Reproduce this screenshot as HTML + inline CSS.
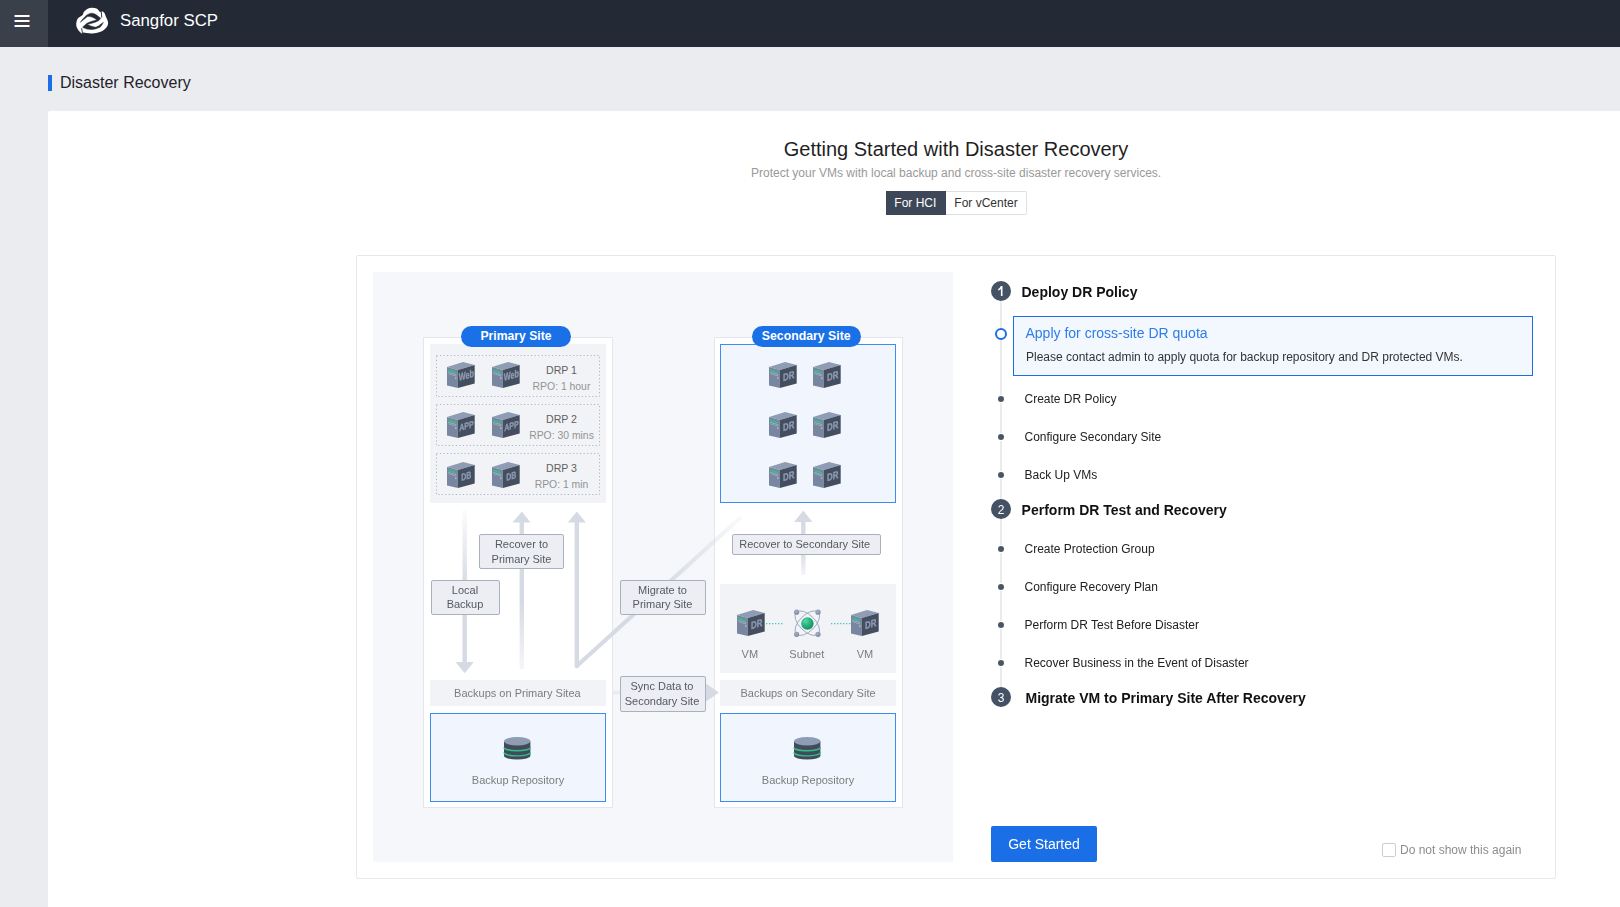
<!DOCTYPE html>
<html><head><meta charset="utf-8"><title>Disaster Recovery</title>
<style>
html,body{margin:0;padding:0;}
body{width:1620px;height:907px;overflow:hidden;position:relative;background:#ebecf0;font-family:"Liberation Sans",sans-serif;}
.t{position:absolute;white-space:nowrap;}
.r{position:absolute;box-sizing:border-box;}
svg{position:absolute;overflow:visible;}
</style></head><body>

<div class="r" style="left:0px;top:0px;width:1620px;height:47px;background:#232a35;"></div>
<div class="r" style="left:0px;top:0px;width:48px;height:47px;background:#3a4049;"></div>
<div class="r" style="left:14px;top:15px;width:16px;height:2px;background:#fff;"></div>
<div class="r" style="left:14px;top:15px;width:1px;height:2px;background:#5a6cff;opacity:0.8;"></div>
<div class="r" style="left:29px;top:15px;width:1px;height:2px;background:#ff5a5a;opacity:0.8;"></div>
<div class="r" style="left:14px;top:20px;width:16px;height:2px;background:#fff;"></div>
<div class="r" style="left:14px;top:20px;width:1px;height:2px;background:#5a6cff;opacity:0.8;"></div>
<div class="r" style="left:29px;top:20px;width:1px;height:2px;background:#ff5a5a;opacity:0.8;"></div>
<div class="r" style="left:14px;top:25px;width:16px;height:2px;background:#fff;"></div>
<div class="r" style="left:14px;top:25px;width:1px;height:2px;background:#5a6cff;opacity:0.8;"></div>
<div class="r" style="left:29px;top:25px;width:1px;height:2px;background:#ff5a5a;opacity:0.8;"></div>
<svg style="left:74px;top:6px" width="36" height="30" viewBox="0 0 36 30">
<path fill="#fff" d="M7.70,27.60 C7.70,27.60 5.48,25.77 4.60,24.50 C3.72,23.23 2.73,21.48 2.40,20.00 C2.07,18.52 2.28,16.95 2.60,15.60 C2.92,14.25 3.30,13.02 4.30,11.90 C5.30,10.78 7.68,9.88 8.60,8.90 C9.52,7.92 9.03,6.98 9.80,6.00 C10.57,5.02 11.85,3.70 13.20,3.00 C14.55,2.30 16.35,1.87 17.90,1.80 C19.45,1.73 21.27,2.02 22.50,2.60 C23.73,3.18 24.65,4.67 25.30,5.30 C25.95,5.93 26.40,6.40 26.40,6.40 C26.40,6.40 27.30,4.90 27.30,4.90 C27.30,4.90 28.25,5.22 28.80,5.60 C29.35,5.98 30.13,6.47 30.60,7.20 C31.07,7.93 31.13,8.88 31.60,10.00 C32.07,11.12 32.98,12.70 33.40,13.90 C33.82,15.10 34.15,16.10 34.10,17.20 C34.05,18.30 33.72,19.45 33.10,20.50 C32.48,21.55 31.62,22.57 30.40,23.50 C29.18,24.43 27.78,25.43 25.80,26.10 C23.82,26.77 20.70,27.33 18.50,27.50 C16.30,27.67 14.13,27.25 12.60,27.10 C11.07,26.95 9.97,26.50 9.30,26.60 C8.63,26.70 8.60,27.70 8.60,27.70 C8.60,27.70 7.70,27.60 7.70,27.60 Z"/>
<path fill="#232a35" stroke="#232a35" stroke-width="0.45" stroke-linejoin="round" d="M6.40,16.30 C6.40,16.30 8.12,13.82 9.20,12.60 C10.28,11.38 11.62,9.90 12.90,9.00 C14.18,8.10 15.63,7.40 16.90,7.20 C18.17,7.00 19.33,7.33 20.50,7.80 C21.67,8.27 22.85,9.25 23.90,10.00 C24.95,10.75 26.80,12.30 26.80,12.30 C26.80,12.30 25.62,13.90 24.80,14.50 C23.98,15.10 23.22,15.40 21.90,15.90 C20.58,16.40 18.30,17.08 16.90,17.50 C15.50,17.92 13.50,18.40 13.50,18.40 C13.50,18.40 16.50,19.85 17.90,20.30 C19.30,20.75 20.58,21.33 21.90,21.10 C23.22,20.87 24.55,19.70 25.80,18.90 C27.05,18.10 29.40,16.30 29.40,16.30 C29.40,16.30 27.88,19.47 26.80,20.50 C25.72,21.53 24.38,22.00 22.90,22.50 C21.42,23.00 19.57,23.40 17.90,23.50 C16.23,23.60 14.45,23.47 12.90,23.10 C11.35,22.73 8.60,21.30 8.60,21.30 C8.60,21.30 10.78,18.80 12.00,17.90 C13.22,17.00 14.58,16.43 15.90,15.90 C17.22,15.37 18.75,15.07 19.90,14.70 C21.05,14.33 22.80,13.70 22.80,13.70 C22.80,13.70 20.88,12.48 19.90,12.00 C18.92,11.52 17.97,11.03 16.90,10.80 C15.83,10.57 13.50,10.60 13.50,10.60 C13.50,10.60 12.18,11.55 11.00,12.50 C9.82,13.45 6.40,16.30 6.40,16.30 Z"/>
<path fill="none" stroke="#232a35" stroke-width="0.9" stroke-linecap="round" d="M27.3,5.2 L27.7,11.2 M7.7,22.6 L8.5,27.5"/>
</svg>
<div class="t" style="left:120px;top:12px;font-size:17px;line-height:17px;color:#fff;font-size:16.8px;">Sangfor SCP</div>
<div class="r" style="left:48px;top:75px;width:4px;height:16px;background:#1b6ee8;"></div>
<div class="t" style="left:60px;top:75px;font-size:16px;line-height:16px;color:#1f2329;">Disaster Recovery</div>
<div class="r" style="left:48px;top:111px;width:1572px;height:796px;background:#fff;border-top-left-radius:2px;"></div>
<div class="t" style="left:756.0px;width:400px;text-align:center;top:139px;font-size:20px;line-height:20px;color:#1f1f1f;">Getting Started with Disaster Recovery</div>
<div class="t" style="left:751.0px;width:400px;text-align:center;top:167px;font-size:12px;line-height:12px;color:#999;">Protect your VMs with local backup and cross-site disaster recovery services.</div>
<div class="r" style="left:886px;top:191px;width:60px;height:24px;background:#3d4757;"></div>
<div class="t" style="left:885.3px;width:60px;text-align:center;top:197px;font-size:12px;line-height:12px;color:#fff;">For HCI</div>
<div class="r" style="left:946px;top:191px;width:81px;height:24px;border:1px solid #dcdfe6;border-left:none;border-radius:0 2px 2px 0;"></div>
<div class="t" style="left:946.0px;width:80px;text-align:center;top:197px;font-size:12px;line-height:12px;color:#333;">For vCenter</div>
<div class="r" style="left:356px;top:255px;width:1200px;height:624px;border:1px solid #e6e8ec;border-radius:2px;"></div>
<div class="r" style="left:373px;top:272px;width:580px;height:590px;background:#f5f7fa;"></div>
<div class="r" style="left:423px;top:337px;width:190px;height:471px;background:#fff;border:1px solid #e3e6ed;"></div>
<div class="r" style="left:430px;top:344px;width:176px;height:159px;background:#f1f3f7;"></div>
<svg style="left:436px;top:355px" width="164" height="42"><rect x="0.5" y="0.5" width="163" height="41" fill="none" stroke="#aeb5c0" stroke-width="1" stroke-dasharray="1.2 2.3"/></svg>
<div class="t" style="left:521.5px;width:80px;text-align:center;top:365px;font-size:11px;line-height:11px;color:#606060;font-size:10.6px;">DRP 1</div>
<div class="t" style="left:521.5px;width:80px;text-align:center;top:381px;font-size:11px;line-height:11px;color:#939393;font-size:10.4px;">RPO: 1 hour</div>
<svg style="left:436px;top:404px" width="164" height="42"><rect x="0.5" y="0.5" width="163" height="41" fill="none" stroke="#aeb5c0" stroke-width="1" stroke-dasharray="1.2 2.3"/></svg>
<div class="t" style="left:521.5px;width:80px;text-align:center;top:414px;font-size:11px;line-height:11px;color:#606060;font-size:10.6px;">DRP 2</div>
<div class="t" style="left:521.5px;width:80px;text-align:center;top:430px;font-size:11px;line-height:11px;color:#939393;font-size:10.4px;">RPO: 30 mins</div>
<svg style="left:436px;top:453px" width="164" height="42"><rect x="0.5" y="0.5" width="163" height="41" fill="none" stroke="#aeb5c0" stroke-width="1" stroke-dasharray="1.2 2.3"/></svg>
<div class="t" style="left:521.5px;width:80px;text-align:center;top:463px;font-size:11px;line-height:11px;color:#606060;font-size:10.6px;">DRP 3</div>
<div class="t" style="left:521.5px;width:80px;text-align:center;top:479px;font-size:11px;line-height:11px;color:#939393;font-size:10.4px;">RPO: 1 min</div>
<svg style="left:447px;top:362px;will-change:transform" width="28" height="26" viewBox="0 0 28 26">
<path fill="#8e9cb4" d="M0,4.9 L16.1,0 L27.7,3 L10.9,7.9 Z"/>
<path fill="#7886a0" d="M0,4.9 L10.9,7.9 L10.9,25.9 L0,23.4 Z"/>
<path fill="#454e5f" d="M10.9,7.9 L27.7,3 L27.7,21.4 L10.9,25.9 Z"/>
<path fill="#2fc38c" d="M1.2,7.6 L9.3,9.9 L9.3,11.5 L1.2,9.2 Z"/>
<path fill="#a9b4c6" d="M1.2,10 L9.3,12.3 L9.3,13 L1.2,10.7 Z M1.2,11.5 L9.3,13.8 L9.3,14.4 L1.2,12.1 Z"/>
<rect x="8.2" y="15.6" width="1.2" height="1.1" fill="#dfe5ee"/>
<text x="11.7" y="22.5" transform="matrix(1,-0.29,0,1,0,0)" font-family="Liberation Sans" font-weight="bold" font-size="10.5" fill="#8d9bb4" stroke="#8d9bb4" stroke-width="0.35" textLength="15.3" lengthAdjust="spacingAndGlyphs">Web</text>
</svg>
<svg style="left:492px;top:362px;will-change:transform" width="28" height="26" viewBox="0 0 28 26">
<path fill="#8e9cb4" d="M0,4.9 L16.1,0 L27.7,3 L10.9,7.9 Z"/>
<path fill="#7886a0" d="M0,4.9 L10.9,7.9 L10.9,25.9 L0,23.4 Z"/>
<path fill="#454e5f" d="M10.9,7.9 L27.7,3 L27.7,21.4 L10.9,25.9 Z"/>
<path fill="#2fc38c" d="M1.2,7.6 L9.3,9.9 L9.3,11.5 L1.2,9.2 Z"/>
<path fill="#a9b4c6" d="M1.2,10 L9.3,12.3 L9.3,13 L1.2,10.7 Z M1.2,11.5 L9.3,13.8 L9.3,14.4 L1.2,12.1 Z"/>
<rect x="8.2" y="15.6" width="1.2" height="1.1" fill="#dfe5ee"/>
<text x="11.7" y="22.5" transform="matrix(1,-0.29,0,1,0,0)" font-family="Liberation Sans" font-weight="bold" font-size="10.5" fill="#8d9bb4" stroke="#8d9bb4" stroke-width="0.35" textLength="15.3" lengthAdjust="spacingAndGlyphs">Web</text>
</svg>
<svg style="left:447px;top:412px;will-change:transform" width="28" height="26" viewBox="0 0 28 26">
<path fill="#8e9cb4" d="M0,4.9 L16.1,0 L27.7,3 L10.9,7.9 Z"/>
<path fill="#7886a0" d="M0,4.9 L10.9,7.9 L10.9,25.9 L0,23.4 Z"/>
<path fill="#454e5f" d="M10.9,7.9 L27.7,3 L27.7,21.4 L10.9,25.9 Z"/>
<path fill="#2fc38c" d="M1.2,7.6 L9.3,9.9 L9.3,11.5 L1.2,9.2 Z"/>
<path fill="#a9b4c6" d="M1.2,10 L9.3,12.3 L9.3,13 L1.2,10.7 Z M1.2,11.5 L9.3,13.8 L9.3,14.4 L1.2,12.1 Z"/>
<rect x="8.2" y="15.6" width="1.2" height="1.1" fill="#dfe5ee"/>
<text x="12.2" y="22.8" transform="matrix(1,-0.29,0,1,0,0)" font-family="Liberation Sans" font-weight="bold" font-size="9.5" fill="#8d9bb4" stroke="#8d9bb4" stroke-width="0.35" textLength="14.5" lengthAdjust="spacingAndGlyphs">APP</text>
</svg>
<svg style="left:492px;top:412px;will-change:transform" width="28" height="26" viewBox="0 0 28 26">
<path fill="#8e9cb4" d="M0,4.9 L16.1,0 L27.7,3 L10.9,7.9 Z"/>
<path fill="#7886a0" d="M0,4.9 L10.9,7.9 L10.9,25.9 L0,23.4 Z"/>
<path fill="#454e5f" d="M10.9,7.9 L27.7,3 L27.7,21.4 L10.9,25.9 Z"/>
<path fill="#2fc38c" d="M1.2,7.6 L9.3,9.9 L9.3,11.5 L1.2,9.2 Z"/>
<path fill="#a9b4c6" d="M1.2,10 L9.3,12.3 L9.3,13 L1.2,10.7 Z M1.2,11.5 L9.3,13.8 L9.3,14.4 L1.2,12.1 Z"/>
<rect x="8.2" y="15.6" width="1.2" height="1.1" fill="#dfe5ee"/>
<text x="12.2" y="22.8" transform="matrix(1,-0.29,0,1,0,0)" font-family="Liberation Sans" font-weight="bold" font-size="9.5" fill="#8d9bb4" stroke="#8d9bb4" stroke-width="0.35" textLength="14.5" lengthAdjust="spacingAndGlyphs">APP</text>
</svg>
<svg style="left:447px;top:462px;will-change:transform" width="28" height="26" viewBox="0 0 28 26">
<path fill="#8e9cb4" d="M0,4.9 L16.1,0 L27.7,3 L10.9,7.9 Z"/>
<path fill="#7886a0" d="M0,4.9 L10.9,7.9 L10.9,25.9 L0,23.4 Z"/>
<path fill="#454e5f" d="M10.9,7.9 L27.7,3 L27.7,21.4 L10.9,25.9 Z"/>
<path fill="#2fc38c" d="M1.2,7.6 L9.3,9.9 L9.3,11.5 L1.2,9.2 Z"/>
<path fill="#a9b4c6" d="M1.2,10 L9.3,12.3 L9.3,13 L1.2,10.7 Z M1.2,11.5 L9.3,13.8 L9.3,14.4 L1.2,12.1 Z"/>
<rect x="8.2" y="15.6" width="1.2" height="1.1" fill="#dfe5ee"/>
<text x="14.2" y="23.2" transform="matrix(1,-0.29,0,1,0,0)" font-family="Liberation Sans" font-weight="bold" font-size="10" fill="#8d9bb4" stroke="#8d9bb4" stroke-width="0.35" textLength="10" lengthAdjust="spacingAndGlyphs">DB</text>
</svg>
<svg style="left:492px;top:462px;will-change:transform" width="28" height="26" viewBox="0 0 28 26">
<path fill="#8e9cb4" d="M0,4.9 L16.1,0 L27.7,3 L10.9,7.9 Z"/>
<path fill="#7886a0" d="M0,4.9 L10.9,7.9 L10.9,25.9 L0,23.4 Z"/>
<path fill="#454e5f" d="M10.9,7.9 L27.7,3 L27.7,21.4 L10.9,25.9 Z"/>
<path fill="#2fc38c" d="M1.2,7.6 L9.3,9.9 L9.3,11.5 L1.2,9.2 Z"/>
<path fill="#a9b4c6" d="M1.2,10 L9.3,12.3 L9.3,13 L1.2,10.7 Z M1.2,11.5 L9.3,13.8 L9.3,14.4 L1.2,12.1 Z"/>
<rect x="8.2" y="15.6" width="1.2" height="1.1" fill="#dfe5ee"/>
<text x="14.2" y="23.2" transform="matrix(1,-0.29,0,1,0,0)" font-family="Liberation Sans" font-weight="bold" font-size="10" fill="#8d9bb4" stroke="#8d9bb4" stroke-width="0.35" textLength="10" lengthAdjust="spacingAndGlyphs">DB</text>
</svg>
<div class="r" style="left:461px;top:326px;width:110px;height:21px;background:#1a70e6;border-radius:11px;"></div>
<div class="t" style="left:461.0px;width:110px;text-align:center;top:330px;font-size:12px;line-height:12px;color:#fff;font-weight:bold;font-size:12.2px;">Primary Site</div>
<div class="r" style="left:714px;top:337px;width:189px;height:471px;background:#fff;border:1px solid #e3e6ed;"></div>
<div class="r" style="left:720px;top:344px;width:176px;height:159px;background:#f1f6fe;border:1px solid #3f8cf0;"></div>
<svg style="left:769px;top:362px;will-change:transform" width="28" height="26" viewBox="0 0 28 26">
<path fill="#8e9cb4" d="M0,4.9 L16.1,0 L27.7,3 L10.9,7.9 Z"/>
<path fill="#7886a0" d="M0,4.9 L10.9,7.9 L10.9,25.9 L0,23.4 Z"/>
<path fill="#454e5f" d="M10.9,7.9 L27.7,3 L27.7,21.4 L10.9,25.9 Z"/>
<path fill="#2fc38c" d="M1.2,7.6 L9.3,9.9 L9.3,11.5 L1.2,9.2 Z"/>
<path fill="#a9b4c6" d="M1.2,10 L9.3,12.3 L9.3,13 L1.2,10.7 Z M1.2,11.5 L9.3,13.8 L9.3,14.4 L1.2,12.1 Z"/>
<rect x="8.2" y="15.6" width="1.2" height="1.1" fill="#dfe5ee"/>
<text x="14.1" y="23.3" transform="matrix(1,-0.29,0,1,0,0)" font-family="Liberation Sans" font-weight="bold" font-size="10.4" fill="#8d9bb4" stroke="#8d9bb4" stroke-width="0.35" textLength="11.4" lengthAdjust="spacingAndGlyphs">DR</text>
</svg>
<svg style="left:813px;top:362px;will-change:transform" width="28" height="26" viewBox="0 0 28 26">
<path fill="#8e9cb4" d="M0,4.9 L16.1,0 L27.7,3 L10.9,7.9 Z"/>
<path fill="#7886a0" d="M0,4.9 L10.9,7.9 L10.9,25.9 L0,23.4 Z"/>
<path fill="#454e5f" d="M10.9,7.9 L27.7,3 L27.7,21.4 L10.9,25.9 Z"/>
<path fill="#2fc38c" d="M1.2,7.6 L9.3,9.9 L9.3,11.5 L1.2,9.2 Z"/>
<path fill="#a9b4c6" d="M1.2,10 L9.3,12.3 L9.3,13 L1.2,10.7 Z M1.2,11.5 L9.3,13.8 L9.3,14.4 L1.2,12.1 Z"/>
<rect x="8.2" y="15.6" width="1.2" height="1.1" fill="#dfe5ee"/>
<text x="14.1" y="23.3" transform="matrix(1,-0.29,0,1,0,0)" font-family="Liberation Sans" font-weight="bold" font-size="10.4" fill="#8d9bb4" stroke="#8d9bb4" stroke-width="0.35" textLength="11.4" lengthAdjust="spacingAndGlyphs">DR</text>
</svg>
<svg style="left:769px;top:412px;will-change:transform" width="28" height="26" viewBox="0 0 28 26">
<path fill="#8e9cb4" d="M0,4.9 L16.1,0 L27.7,3 L10.9,7.9 Z"/>
<path fill="#7886a0" d="M0,4.9 L10.9,7.9 L10.9,25.9 L0,23.4 Z"/>
<path fill="#454e5f" d="M10.9,7.9 L27.7,3 L27.7,21.4 L10.9,25.9 Z"/>
<path fill="#2fc38c" d="M1.2,7.6 L9.3,9.9 L9.3,11.5 L1.2,9.2 Z"/>
<path fill="#a9b4c6" d="M1.2,10 L9.3,12.3 L9.3,13 L1.2,10.7 Z M1.2,11.5 L9.3,13.8 L9.3,14.4 L1.2,12.1 Z"/>
<rect x="8.2" y="15.6" width="1.2" height="1.1" fill="#dfe5ee"/>
<text x="14.1" y="23.3" transform="matrix(1,-0.29,0,1,0,0)" font-family="Liberation Sans" font-weight="bold" font-size="10.4" fill="#8d9bb4" stroke="#8d9bb4" stroke-width="0.35" textLength="11.4" lengthAdjust="spacingAndGlyphs">DR</text>
</svg>
<svg style="left:813px;top:412px;will-change:transform" width="28" height="26" viewBox="0 0 28 26">
<path fill="#8e9cb4" d="M0,4.9 L16.1,0 L27.7,3 L10.9,7.9 Z"/>
<path fill="#7886a0" d="M0,4.9 L10.9,7.9 L10.9,25.9 L0,23.4 Z"/>
<path fill="#454e5f" d="M10.9,7.9 L27.7,3 L27.7,21.4 L10.9,25.9 Z"/>
<path fill="#2fc38c" d="M1.2,7.6 L9.3,9.9 L9.3,11.5 L1.2,9.2 Z"/>
<path fill="#a9b4c6" d="M1.2,10 L9.3,12.3 L9.3,13 L1.2,10.7 Z M1.2,11.5 L9.3,13.8 L9.3,14.4 L1.2,12.1 Z"/>
<rect x="8.2" y="15.6" width="1.2" height="1.1" fill="#dfe5ee"/>
<text x="14.1" y="23.3" transform="matrix(1,-0.29,0,1,0,0)" font-family="Liberation Sans" font-weight="bold" font-size="10.4" fill="#8d9bb4" stroke="#8d9bb4" stroke-width="0.35" textLength="11.4" lengthAdjust="spacingAndGlyphs">DR</text>
</svg>
<svg style="left:769px;top:462px;will-change:transform" width="28" height="26" viewBox="0 0 28 26">
<path fill="#8e9cb4" d="M0,4.9 L16.1,0 L27.7,3 L10.9,7.9 Z"/>
<path fill="#7886a0" d="M0,4.9 L10.9,7.9 L10.9,25.9 L0,23.4 Z"/>
<path fill="#454e5f" d="M10.9,7.9 L27.7,3 L27.7,21.4 L10.9,25.9 Z"/>
<path fill="#2fc38c" d="M1.2,7.6 L9.3,9.9 L9.3,11.5 L1.2,9.2 Z"/>
<path fill="#a9b4c6" d="M1.2,10 L9.3,12.3 L9.3,13 L1.2,10.7 Z M1.2,11.5 L9.3,13.8 L9.3,14.4 L1.2,12.1 Z"/>
<rect x="8.2" y="15.6" width="1.2" height="1.1" fill="#dfe5ee"/>
<text x="14.1" y="23.3" transform="matrix(1,-0.29,0,1,0,0)" font-family="Liberation Sans" font-weight="bold" font-size="10.4" fill="#8d9bb4" stroke="#8d9bb4" stroke-width="0.35" textLength="11.4" lengthAdjust="spacingAndGlyphs">DR</text>
</svg>
<svg style="left:813px;top:462px;will-change:transform" width="28" height="26" viewBox="0 0 28 26">
<path fill="#8e9cb4" d="M0,4.9 L16.1,0 L27.7,3 L10.9,7.9 Z"/>
<path fill="#7886a0" d="M0,4.9 L10.9,7.9 L10.9,25.9 L0,23.4 Z"/>
<path fill="#454e5f" d="M10.9,7.9 L27.7,3 L27.7,21.4 L10.9,25.9 Z"/>
<path fill="#2fc38c" d="M1.2,7.6 L9.3,9.9 L9.3,11.5 L1.2,9.2 Z"/>
<path fill="#a9b4c6" d="M1.2,10 L9.3,12.3 L9.3,13 L1.2,10.7 Z M1.2,11.5 L9.3,13.8 L9.3,14.4 L1.2,12.1 Z"/>
<rect x="8.2" y="15.6" width="1.2" height="1.1" fill="#dfe5ee"/>
<text x="14.1" y="23.3" transform="matrix(1,-0.29,0,1,0,0)" font-family="Liberation Sans" font-weight="bold" font-size="10.4" fill="#8d9bb4" stroke="#8d9bb4" stroke-width="0.35" textLength="11.4" lengthAdjust="spacingAndGlyphs">DR</text>
</svg>
<div class="r" style="left:752px;top:326px;width:109px;height:21px;background:#1a70e6;border-radius:11px;"></div>
<div class="t" style="left:751.2px;width:110px;text-align:center;top:330px;font-size:12px;line-height:12px;color:#fff;font-weight:bold;font-size:12.3px;">Secondary Site</div>
<svg style="left:0px;top:0px" width="1620" height="907" viewBox="0 0 1620 907">
<defs>
<linearGradient id="gdown" x1="0" y1="0" x2="0" y2="1"><stop offset="0" stop-color="#d6dae3" stop-opacity="0.1"/><stop offset="0.5" stop-color="#d6dae3"/><stop offset="1" stop-color="#d6dae3"/></linearGradient>
<linearGradient id="gup" x1="0" y1="0" x2="0" y2="1"><stop offset="0" stop-color="#d6dae3"/><stop offset="0.55" stop-color="#d6dae3"/><stop offset="1" stop-color="#d6dae3" stop-opacity="0.25"/></linearGradient>
<linearGradient id="gdiag" gradientUnits="userSpaceOnUse" x1="577" y1="667" x2="740" y2="518"><stop offset="0" stop-color="#d6dae3"/><stop offset="0.5" stop-color="#d6dae3"/><stop offset="1" stop-color="#d6dae3" stop-opacity="0.15"/></linearGradient>
</defs>
<rect x="462.5" y="510" width="4.4" height="153" fill="url(#gdown)"/>
<path d="M455.6,662 L473.8,662 L464.7,673.3 Z" fill="#d6dae3"/>
<rect x="519.6" y="521" width="4.4" height="148" fill="url(#gup)"/>
<path d="M512.5,522.6 L530.6,522.6 L521.8,511.5 Z" fill="#d6dae3"/>
<path d="M576.8,666 L740,518" fill="none" stroke="url(#gdiag)" stroke-width="4.2" stroke-linecap="round"/>
<path d="M576.8,521 L576.8,666" fill="none" stroke="#d6dae3" stroke-width="4.4" stroke-linecap="round"/>
<path d="M567.7,522.6 L585.9,522.6 L576.8,511.5 Z" fill="#d6dae3"/>
<rect x="801.1" y="521" width="4.4" height="54" fill="url(#gup)"/>
<path d="M794.1,522 L812.4,522 L803.3,510.4 Z" fill="#d6dae3"/>
<rect x="612" y="690.5" width="8" height="4" fill="#e8ebf0"/>
<path d="M706,683.6 L706,701.4 L718.9,692.5 Z" fill="#d6dae3"/>
</svg>
<div class="r" style="left:479px;top:534px;width:85px;height:35px;background:#eceef3;border:1px solid #a9b0be;border-radius:2px;"></div>
<div class="t" style="left:479.5px;width:84px;text-align:center;top:539px;font-size:11px;line-height:11px;color:#555a60;">Recover to</div>
<div class="t" style="left:479.5px;width:84px;text-align:center;top:554px;font-size:11px;line-height:11px;color:#555a60;">Primary Site</div>
<div class="r" style="left:431px;top:580px;width:69px;height:35px;background:#eceef3;border:1px solid #a9b0be;border-radius:2px;"></div>
<div class="t" style="left:431.0px;width:68px;text-align:center;top:585px;font-size:11px;line-height:11px;color:#555a60;">Local</div>
<div class="t" style="left:431.0px;width:68px;text-align:center;top:599px;font-size:11px;line-height:11px;color:#555a60;">Backup</div>
<div class="r" style="left:620px;top:580px;width:86px;height:35px;background:#eceef3;border:1px solid #a9b0be;border-radius:2px;"></div>
<div class="t" style="left:620.5px;width:84px;text-align:center;top:585px;font-size:11px;line-height:11px;color:#555a60;">Migrate to</div>
<div class="t" style="left:620.5px;width:84px;text-align:center;top:599px;font-size:11px;line-height:11px;color:#555a60;">Primary Site</div>
<div class="r" style="left:620px;top:676px;width:86px;height:36px;background:#eceef3;border:1px solid #a9b0be;border-radius:2px;"></div>
<div class="t" style="left:620.0px;width:84px;text-align:center;top:681px;font-size:11px;line-height:11px;color:#555a60;">Sync Data to</div>
<div class="t" style="left:620.0px;width:84px;text-align:center;top:696px;font-size:11px;line-height:11px;color:#555a60;">Secondary Site</div>
<div class="r" style="left:732px;top:534px;width:149px;height:21px;background:#eceef3;border:1px solid #a9b0be;border-radius:2px;"></div>
<div class="t" style="left:730.7px;width:148px;text-align:center;top:539px;font-size:11px;line-height:11px;color:#555a60;">Recover to Secondary Site</div>
<div class="r" style="left:430px;top:680px;width:176px;height:26px;background:#f1f3f7;"></div>
<div class="t" style="left:429.4px;width:176px;text-align:center;top:688px;font-size:11px;line-height:11px;color:#7c7c7c;">Backups on Primary Sitea</div>
<div class="r" style="left:720px;top:680px;width:176px;height:26px;background:#f1f3f7;"></div>
<div class="t" style="left:720.0px;width:176px;text-align:center;top:688px;font-size:11px;line-height:11px;color:#7c7c7c;">Backups on Secondary Site</div>
<div class="r" style="left:430px;top:713px;width:176px;height:89px;background:#f1f6fe;border:1px solid #3f8cf0;"></div>
<svg style="left:504.4px;top:737px" width="27" height="23" viewBox="0 0 27 23">
<path fill="#434b5a" d="M0,4.2 L0,18.8 A13.2,3.8 0 0 0 26.4,18.8 L26.4,4.2 Z"/>
<path fill="none" stroke="#2fbf8a" stroke-width="1.4" d="M0,10.4 A13.2,3.3 0 0 0 26.4,10.4 M0,15.6 A13.2,3.3 0 0 0 26.4,15.6"/>
<ellipse cx="13.2" cy="4.2" rx="13.2" ry="4.2" fill="#8e9cb4"/>
</svg>
<div class="t" style="left:430.0px;width:176px;text-align:center;top:775px;font-size:11px;line-height:11px;color:#7c7c7c;">Backup Repository</div>
<div class="r" style="left:720px;top:713px;width:176px;height:89px;background:#f1f6fe;border:1px solid #3f8cf0;"></div>
<svg style="left:794.4px;top:737px" width="27" height="23" viewBox="0 0 27 23">
<path fill="#434b5a" d="M0,4.2 L0,18.8 A13.2,3.8 0 0 0 26.4,18.8 L26.4,4.2 Z"/>
<path fill="none" stroke="#2fbf8a" stroke-width="1.4" d="M0,10.4 A13.2,3.3 0 0 0 26.4,10.4 M0,15.6 A13.2,3.3 0 0 0 26.4,15.6"/>
<ellipse cx="13.2" cy="4.2" rx="13.2" ry="4.2" fill="#8e9cb4"/>
</svg>
<div class="t" style="left:720.0px;width:176px;text-align:center;top:775px;font-size:11px;line-height:11px;color:#7c7c7c;">Backup Repository</div>
<div class="r" style="left:720px;top:584px;width:176px;height:89px;background:#f1f3f7;"></div>
<svg style="left:737px;top:610px;will-change:transform" width="28" height="26" viewBox="0 0 28 26">
<path fill="#8e9cb4" d="M0,4.9 L16.1,0 L27.7,3 L10.9,7.9 Z"/>
<path fill="#7886a0" d="M0,4.9 L10.9,7.9 L10.9,25.9 L0,23.4 Z"/>
<path fill="#454e5f" d="M10.9,7.9 L27.7,3 L27.7,21.4 L10.9,25.9 Z"/>
<path fill="#2fc38c" d="M1.2,7.6 L9.3,9.9 L9.3,11.5 L1.2,9.2 Z"/>
<path fill="#a9b4c6" d="M1.2,10 L9.3,12.3 L9.3,13 L1.2,10.7 Z M1.2,11.5 L9.3,13.8 L9.3,14.4 L1.2,12.1 Z"/>
<rect x="8.2" y="15.6" width="1.2" height="1.1" fill="#dfe5ee"/>
<text x="14.1" y="23.3" transform="matrix(1,-0.29,0,1,0,0)" font-family="Liberation Sans" font-weight="bold" font-size="10.4" fill="#8d9bb4" stroke="#8d9bb4" stroke-width="0.35" textLength="11.4" lengthAdjust="spacingAndGlyphs">DR</text>
</svg>
<svg style="left:851px;top:610px;will-change:transform" width="28" height="26" viewBox="0 0 28 26">
<path fill="#8e9cb4" d="M0,4.9 L16.1,0 L27.7,3 L10.9,7.9 Z"/>
<path fill="#7886a0" d="M0,4.9 L10.9,7.9 L10.9,25.9 L0,23.4 Z"/>
<path fill="#454e5f" d="M10.9,7.9 L27.7,3 L27.7,21.4 L10.9,25.9 Z"/>
<path fill="#2fc38c" d="M1.2,7.6 L9.3,9.9 L9.3,11.5 L1.2,9.2 Z"/>
<path fill="#a9b4c6" d="M1.2,10 L9.3,12.3 L9.3,13 L1.2,10.7 Z M1.2,11.5 L9.3,13.8 L9.3,14.4 L1.2,12.1 Z"/>
<rect x="8.2" y="15.6" width="1.2" height="1.1" fill="#dfe5ee"/>
<text x="14.1" y="23.3" transform="matrix(1,-0.29,0,1,0,0)" font-family="Liberation Sans" font-weight="bold" font-size="10.4" fill="#8d9bb4" stroke="#8d9bb4" stroke-width="0.35" textLength="11.4" lengthAdjust="spacingAndGlyphs">DR</text>
</svg>
<svg style="left:0;top:0" width="1620" height="907" viewBox="0 0 1620 907">
<line x1="766" y1="623.7" x2="784" y2="623.7" stroke="#48c2c0" stroke-width="1.3" stroke-dasharray="1.3,1.7"/>
<line x1="831" y1="623.7" x2="851" y2="623.7" stroke="#48c2c0" stroke-width="1.3" stroke-dasharray="1.3,1.7"/>
<defs><radialGradient id="sph" cx="0.35" cy="0.3" r="0.75"><stop offset="0" stop-color="#55dba5"/><stop offset="0.45" stop-color="#2fb582"/><stop offset="1" stop-color="#16905f"/></radialGradient>
<radialGradient id="nod" cx="0.4" cy="0.35" r="0.7"><stop offset="0" stop-color="#a3afc3"/><stop offset="1" stop-color="#7a889f"/></radialGradient></defs>
<g fill="none" stroke="#9ba7bb" stroke-width="0.9">
<ellipse cx="807.3" cy="623.2" rx="15.4" ry="8" transform="rotate(45 807.3 623.2)"/>
<ellipse cx="807.3" cy="623.2" rx="15.4" ry="8" transform="rotate(-45 807.3 623.2)"/>
</g>
<g fill="url(#nod)"><circle cx="796.6" cy="612.2" r="2.6"/><circle cx="818" cy="612.2" r="2.6"/><circle cx="796.6" cy="634.3" r="2.6"/><circle cx="818" cy="634.3" r="2.6"/></g>
<circle cx="807.4" cy="623.5" r="6.2" fill="url(#sph)"/>
</svg>
<div class="t" style="left:729.8px;width:40px;text-align:center;top:649px;font-size:11px;line-height:11px;color:#7c7c7c;">VM</div>
<div class="t" style="left:776.8px;width:60px;text-align:center;top:649px;font-size:11px;line-height:11px;color:#7c7c7c;">Subnet</div>
<div class="t" style="left:845.0px;width:40px;text-align:center;top:649px;font-size:11px;line-height:11px;color:#7c7c7c;">VM</div>
<div class="r" style="left:1000px;top:301px;width:2px;height:386px;background:#ebebeb;"></div>
<div class="r" style="left:991px;top:281px;width:20px;height:20px;background:#455164;border-radius:50%;"></div>
<div class="r" style="left:991px;top:499px;width:20px;height:20px;background:#455164;border-radius:50%;"></div>
<div class="t" style="left:991.0px;width:20px;text-align:center;top:504px;font-size:12px;line-height:12px;color:#fff;">2</div>
<div class="r" style="left:991px;top:687px;width:20px;height:20px;background:#455164;border-radius:50%;"></div>
<div class="t" style="left:991.0px;width:20px;text-align:center;top:692px;font-size:12px;line-height:12px;color:#fff;">3</div>
<svg style="left:0;top:0" width="1620" height="907"><path fill="#fff" d="M1000.7,286 L1002.5,286 L1002.5,296 L1000.9,296 L1000.9,289 C1000.2,289.7 999.2,290.2 998.2,290.5 L998.2,289 C999.3,288.5 1000.2,287.5 1000.7,286 Z"/></svg>
<div class="t" style="left:1021.5px;top:285px;font-size:14px;line-height:14px;color:#111;font-weight:bold;">Deploy DR Policy</div>
<div class="t" style="left:1021.6px;top:503px;font-size:14px;line-height:14px;color:#111;font-weight:bold;">Perform DR Test and Recovery</div>
<div class="t" style="left:1025.5px;top:691px;font-size:14px;line-height:14px;color:#111;font-weight:bold;">Migrate VM to Primary Site After Recovery</div>
<div class="r" style="left:1013px;top:316px;width:520px;height:60px;background:#f3f7fe;border:1px solid #1b6ee8;"></div>
<div class="r" style="left:995px;top:328px;width:12px;height:12px;background:#fff;border:2px solid #1b6ee8;border-radius:50%;"></div>
<div class="t" style="left:1025.5px;top:326px;font-size:14px;line-height:14px;color:#2f7de9;">Apply for cross-site DR quota</div>
<div class="t" style="left:1026px;top:351px;font-size:12px;line-height:12px;color:#333;">Please contact admin to apply quota for backup repository and DR protected VMs.</div>
<div class="r" style="left:997px;top:395px;width:8px;height:8px;background:#fff;border-radius:50%;"></div>
<div class="r" style="left:998px;top:396px;width:6px;height:6px;background:#4b5565;border-radius:50%;"></div>
<div class="t" style="left:1024.5px;top:393px;font-size:12px;line-height:12px;color:#222;">Create DR Policy</div>
<div class="r" style="left:997px;top:433px;width:8px;height:8px;background:#fff;border-radius:50%;"></div>
<div class="r" style="left:998px;top:434px;width:6px;height:6px;background:#4b5565;border-radius:50%;"></div>
<div class="t" style="left:1024.5px;top:431px;font-size:12px;line-height:12px;color:#222;">Configure Secondary Site</div>
<div class="r" style="left:997px;top:471px;width:8px;height:8px;background:#fff;border-radius:50%;"></div>
<div class="r" style="left:998px;top:472px;width:6px;height:6px;background:#4b5565;border-radius:50%;"></div>
<div class="t" style="left:1024.5px;top:469px;font-size:12px;line-height:12px;color:#222;">Back Up VMs</div>
<div class="r" style="left:997px;top:545px;width:8px;height:8px;background:#fff;border-radius:50%;"></div>
<div class="r" style="left:998px;top:546px;width:6px;height:6px;background:#4b5565;border-radius:50%;"></div>
<div class="t" style="left:1024.5px;top:543px;font-size:12px;line-height:12px;color:#222;">Create Protection Group</div>
<div class="r" style="left:997px;top:583px;width:8px;height:8px;background:#fff;border-radius:50%;"></div>
<div class="r" style="left:998px;top:584px;width:6px;height:6px;background:#4b5565;border-radius:50%;"></div>
<div class="t" style="left:1024.5px;top:581px;font-size:12px;line-height:12px;color:#222;">Configure Recovery Plan</div>
<div class="r" style="left:997px;top:621px;width:8px;height:8px;background:#fff;border-radius:50%;"></div>
<div class="r" style="left:998px;top:622px;width:6px;height:6px;background:#4b5565;border-radius:50%;"></div>
<div class="t" style="left:1024.5px;top:619px;font-size:12px;line-height:12px;color:#222;">Perform DR Test Before Disaster</div>
<div class="r" style="left:997px;top:659px;width:8px;height:8px;background:#fff;border-radius:50%;"></div>
<div class="r" style="left:998px;top:660px;width:6px;height:6px;background:#4b5565;border-radius:50%;"></div>
<div class="t" style="left:1024.5px;top:657px;font-size:12px;line-height:12px;color:#222;">Recover Business in the Event of Disaster</div>
<div class="r" style="left:991px;top:826px;width:106px;height:36px;background:#1b6fe6;border-radius:2px;"></div>
<div class="t" style="left:991.0px;width:106px;text-align:center;top:837px;font-size:14px;line-height:14px;color:#fff;">Get Started</div>
<div class="r" style="left:1382px;top:843px;width:14px;height:14px;border:1px solid #c9cdd4;border-radius:2px;background:#fff;"></div>
<div class="t" style="left:1400px;top:844px;font-size:12px;line-height:12px;color:#8c8c8c;">Do not show this again</div>
</body></html>
